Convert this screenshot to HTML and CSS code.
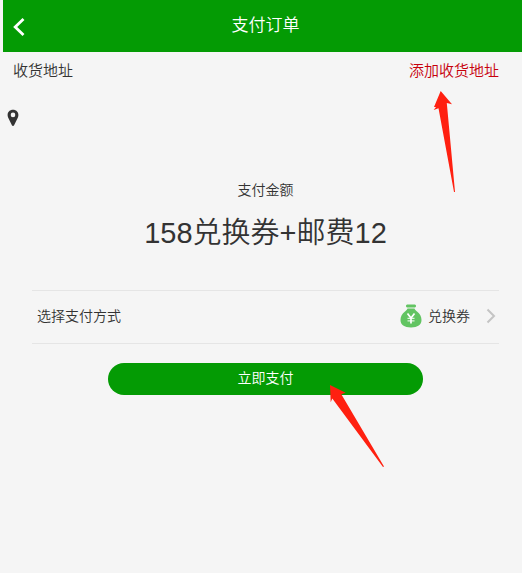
FILE: index.html
```
<!DOCTYPE html>
<html lang="zh-CN">
<head>
  <meta charset="utf-8">
  <meta name="viewport" content="width=device-width, initial-scale=1">
  <title>支付订单</title>
  <link rel="stylesheet" href="styles.css">
</head>
<body>

  <header class="header">
    <button type="button" class="back" aria-label="返回">
      <svg width="12" height="20" viewBox="0 0 12 20"><path d="M10.5 2 L2.2 10 L10.5 18" fill="none" stroke="#fff" stroke-width="2.8"/></svg>
    </button>
    <h1 class="title">支付订单</h1>
  </header>

  <section class="address">
    <div class="address-bar">
      <span>收货地址</span>
      <a href="#" class="address-add">添加收货地址</a>
    </div>
    <svg class="pin" width="12" height="18" viewBox="0 0 12 18"><path fill="#333" fill-rule="evenodd" d="M6 .8C2.900.8.6 3 .6 6c0 1 .2 1.700.5 2.400l3.800 7.900c.4.900 1.800.9 2.200 0L10.900 8.400c.3-.7.5-1.400.5-2.400C11.400 3 9.100.8 6 .8zM6 3.600a2.300 2.300 0 1 1 0 4.600a2.300 2.300 0 0 1 0-4.600z"/></svg>
  </section>

  <main class="pay">
    <p class="pay-label">支付金额</p>
    <p class="pay-amount">158兑换券+邮费12</p>

    <div class="method">
      <span>选择支付方式</span>
      <a href="#" class="method-link">
        <svg width="22" height="24" viewBox="0 0 22 24">
          <path fill="#62c462" d="M7.200 0.500h7.600c1.600 0 1.600 3 0 3H7.200c-1.600 0-1.600-3 0-3z"/>
          <path fill="#62c462" d="M7.500 4.500h7c.3 1.200 1.200 2 2.500 3C19.900 9.600 21.500 12.600 21.500 16c0 4.800-3.800 7.400-10.500 7.400S.5 20.800.5 16C.5 12.600 2.100 9.600 5 7.500 6.300 6.500 7.200 5.700 7.500 4.500z"/>
          <path fill="none" stroke="#fff" stroke-width="1.700" d="M7.500 9.500L11 14L14.500 9.500M11 13.500v6"/>
          <path fill="none" stroke="#fff" stroke-opacity=".8" stroke-width="1.300" d="M7.500 14.300h7M7.500 16.800h7"/>
        </svg>
        <span>兑换券</span>
        <svg class="method-arrow" width="10" height="16" viewBox="0 0 10 16"><path d="M1.500 1.500L8 8L1.500 14.500" fill="none" stroke="#c4c4c4" stroke-width="2"/></svg>
      </a>
    </div>

    <button type="button" class="pay-btn">立即支付</button>
  </main>

  <!-- guide arrows -->
  <svg class="guide guide-add" width="24" height="104" viewBox="0 0 24 104"><path fill="#ff2010" d="M8.700 1L20 14.300L14.800 13L23 102H22L6.500 18.300L1.700 20L4 17L2 17z"/></svg>
  <svg class="guide guide-pay" width="60" height="84" viewBox="0 0 60 84"><path fill="#ff2010" d="M1 1L16.700 8.700L12.300 10.300L55 82.500L54 83L3.300 14.500L1.700 18.300z"/></svg>

</body>
</html>
```
FILE: styles.css
```
* {
  box-sizing: border-box;
}

body {
  position: relative;
  min-height: 100vh;
  margin: 0 0 0 3px;
  background: #f5f5f5;
  color: #333;
  font: 14px/20px "Liberation Sans", "Noto Sans CJK SC", sans-serif;
  font-weight: 350;
}

h1, p {
  margin: 0;
  font-weight: inherit;
}

a {
  color: inherit;
  text-decoration: none;
}

svg {
  display: block;
}

button {
  padding: 0;
  border: none;
  font: inherit;
  color: #fff;
  cursor: pointer;
}

.header {
  display: grid;
  grid-template-columns: 32px 1fr 26px;
  align-items: center;
  height: 52px;
  background: #049b04;
  color: #fff;
}

.back {
  padding: 2px 10px 0;
  background: none;
}

.title {
  font-size: 17px;
  line-height: 24px;
  text-align: center;
}

.address-bar {
  display: flex;
  justify-content: space-between;
  padding: 9px 23px 8px 10px;
  font-size: 15px;
}

.address-add {
  color: #c7000b;
}

.pin {
  margin: 20px 0 0 4px;
}

.pay {
  padding: 53px 23px 0 29px;
  text-align: center;
}

.pay-amount {
  margin: 12px 0 36px;
  font-size: 29px;
  line-height: 42px;
}

.method {
  display: flex;
  justify-content: space-between;
  align-items: center;
  height: 54px;
  padding: 0 3px 2px 5px;
  border-top: 1px solid #e5e5e5;
  border-bottom: 1px solid #e5e5e5;
}

.method-link {
  display: flex;
  align-items: center;
  gap: 6px;
}

.method-arrow {
  margin-left: 10px;
}

.pay-btn {
  width: 67.5%;
  height: 32px;
  margin-top: 19px;
  padding-bottom: 2px;
  border-radius: 16px;
  background: #049b04;
}

.guide {
  position: absolute;
  pointer-events: none;
}

.guide-add {
  top: 90px;
  right: 66px;
}

.guide-pay {
  top: 384px;
  left: 326px;
}
```
